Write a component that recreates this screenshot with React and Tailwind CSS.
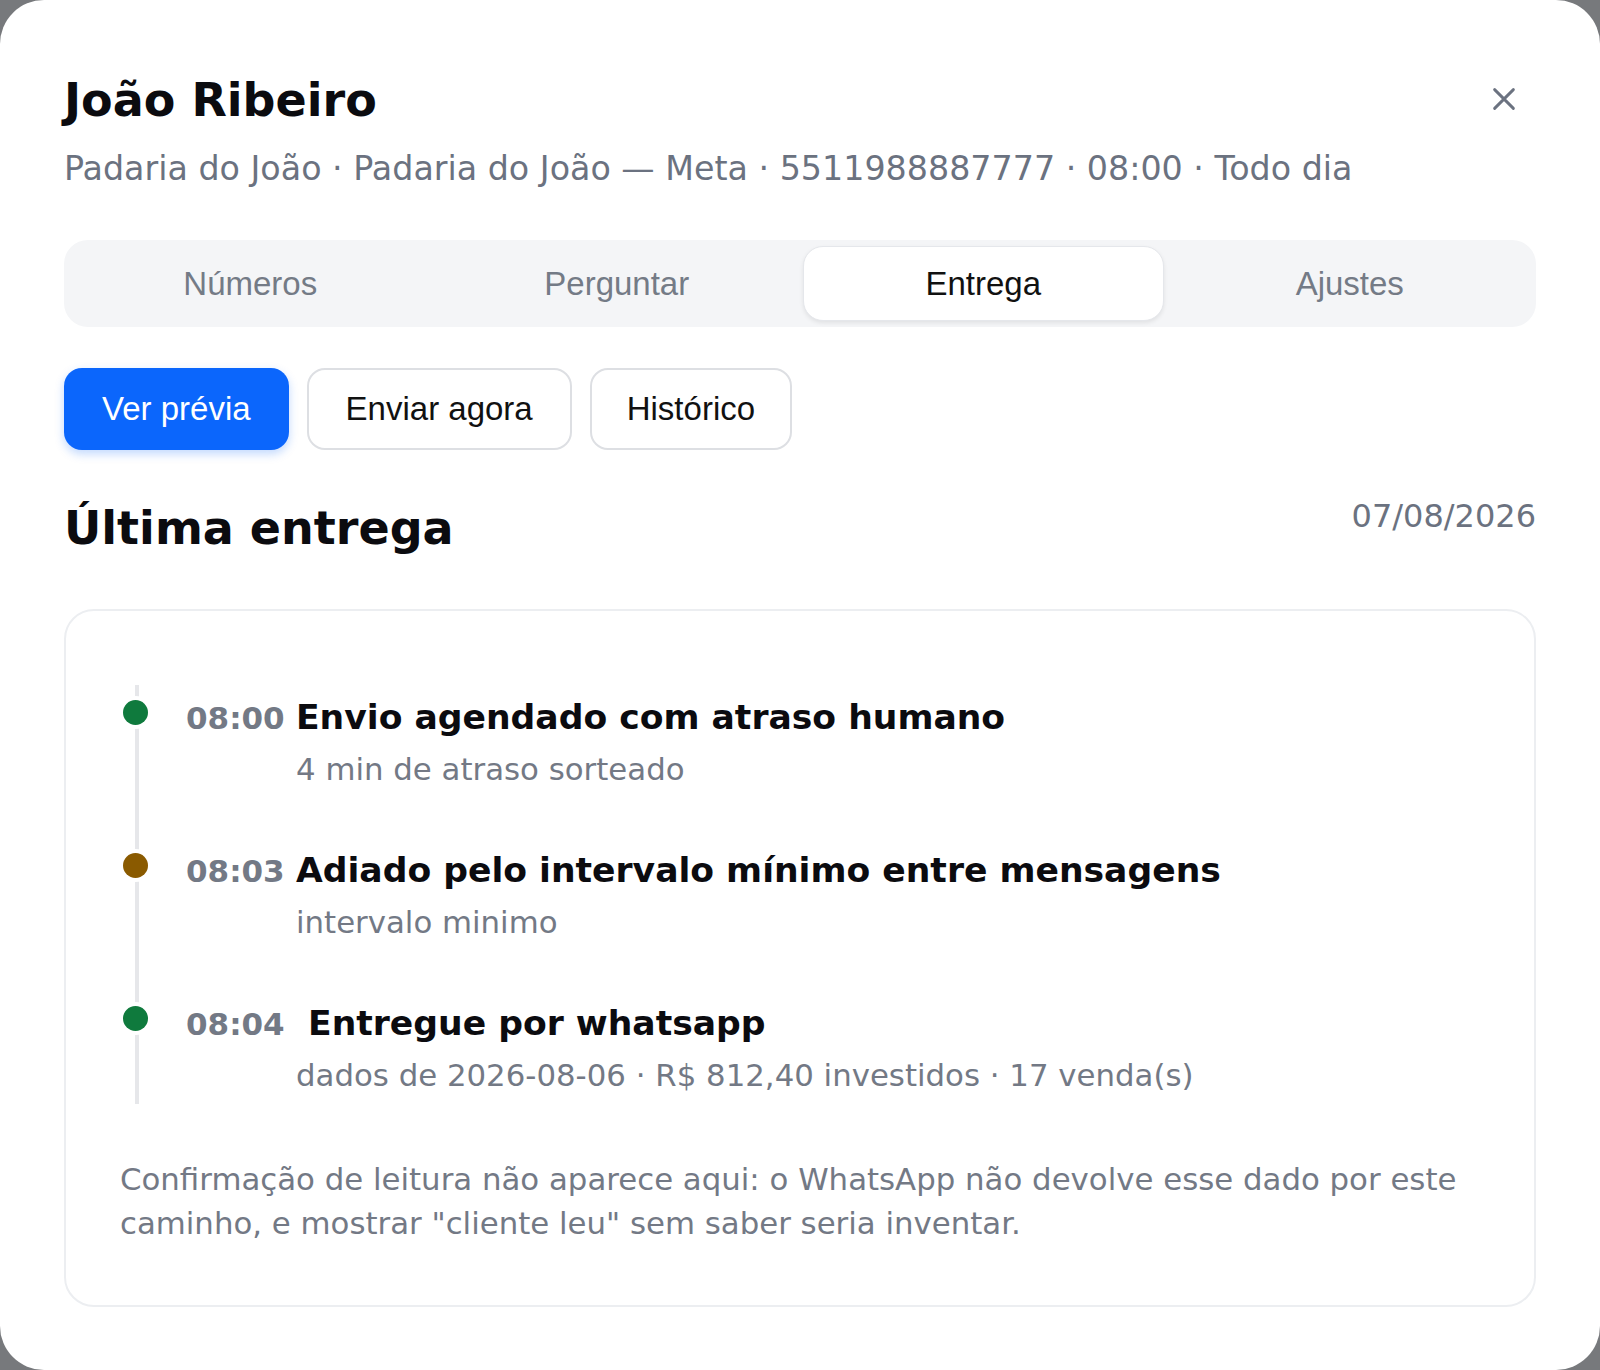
import React from "react";

const dv = { fontFamily: '"DejaVu Sans", "Liberation Sans", sans-serif' };
const ar = { fontFamily: '"Liberation Sans", Arial, sans-serif' };

const tabs = ["Números", "Perguntar", "Entrega", "Ajustes"];

const events = [
  { time: "08:00", title: "Envio agendado com atraso humano", sub: "4 min de atraso sorteado", color: "bg-[#0f7a3d]" },
  { time: "08:03", title: "Adiado pelo intervalo mínimo entre mensagens", sub: "intervalo minimo", color: "bg-[#8a5a00]" },
  { time: "08:04", title: "\u00a0Entregue por whatsapp", sub: "dados de 2026-08-06 · R$ 812,40 investidos · 17 venda(s)", color: "bg-[#0f7a3d]" },
];

function CloseIcon() {
  return (
    <svg width="30" height="30" viewBox="0 0 24 24" fill="none" stroke="#6b7280" strokeWidth="2.3" strokeLinecap="round">
      <path d="M4.5 4.5 L19.5 19.5 M19.5 4.5 L4.5 19.5" />
    </svg>
  );
}

export default function App() {
  return (
    <div className="w-[1600px] h-[1370px] bg-[#77797c]" style={dv}>
      <div className="h-full bg-white rounded-[44px] px-[64px] pt-[72px]">
        {/* header */}
        <div className="flex items-start justify-between">
          <div>
            <h1 className="text-[46px] leading-[56px] font-bold text-[#0b0b0f]">João Ribeiro</h1>
            <p className="mt-[16px] text-[33.3px] leading-[49px] text-[#6b7280]">
              Padaria do João · Padaria do João — Meta · 5511988887777 · 08:00 · Todo dia
            </p>
          </div>
          <button className="mt-[12px] mr-[17px]" aria-label="Fechar">
            <CloseIcon />
          </button>
        </div>

        {/* tabs */}
        <div className="mt-[47px] grid grid-cols-4 gap-[6px] p-[6px] h-[87px] rounded-[24px] bg-[#f4f5f7]" style={ar}>
          {tabs.map((t) => (
            <div
              key={t}
              className={
                t === "Entrega"
                  ? "flex items-center justify-center rounded-[20px] bg-white border border-[#e5e7eb] shadow-[0_2px_4px_rgba(0,0,0,0.08)] text-[33px] text-[#111111]"
                  : "flex items-center justify-center text-[33px] text-[#747b86]"
              }
            >
              {t}
            </div>
          ))}
        </div>

        {/* actions */}
        <div className="mt-[41px] flex gap-[18px]" style={ar}>
          <button className="h-[82px] px-[38px] rounded-[18px] bg-[#0b66fc] text-white text-[33px] shadow-[0_4px_10px_rgba(11,102,252,0.25)]">
            Ver prévia
          </button>
          <button className="h-[82px] px-[37px] rounded-[18px] bg-white border-2 border-[#dddfe3] text-[#111111] text-[33px]">
            Enviar agora
          </button>
          <button className="h-[82px] px-[35px] rounded-[18px] bg-white border-2 border-[#dddfe3] text-[#111111] text-[33px]">
            Histórico
          </button>
        </div>

        {/* last delivery */}
        <div className="mt-[50px] flex items-start justify-between">
          <h2 className="text-[46px] leading-[56px] font-bold text-[#0b0b0f]">Última entrega</h2>
          <span className="mt-[-8px] text-[32px] leading-[48px] text-[#6b7280]">07/08/2026</span>
        </div>

        <div className="mt-[53px] rounded-[30px] border-2 border-[#eceef1] px-[54px] pt-[74px] pb-[60px]">
          <ul className="ml-[15px] border-l-4 border-[#e6e7ea] pl-[47px] pt-[8px] pb-[6px] flex flex-col gap-[54px]">
            {events.map((e) => (
              <li key={e.time} className="relative">
                <span
                  className={`absolute left-[-63px] top-[7px] w-[25px] h-[25px] rounded-full ring-4 ring-white ${e.color}`}
                />
                <div className="flex items-baseline gap-[13px] leading-[49px]">
                  <span className="w-[97px] shrink-0 text-[31px] font-bold text-[#737985]">{e.time}</span>
                  <span className="text-[34.6px] font-bold text-[#0b0b0f] whitespace-pre">{e.title}</span>
                </div>
                <p className="mt-[3px] pl-[110px] text-[30.8px] leading-[46px] text-[#737985]">{e.sub}</p>
              </li>
            ))}
          </ul>

          <p className="mt-[53px] text-[30.8px] leading-[44px] text-[#737985]">
            Confirmação de leitura não aparece aqui: o WhatsApp não devolve esse dado por este caminho, e mostrar
            "cliente leu" sem saber seria inventar.
          </p>
        </div>
      </div>
    </div>
  );
}
